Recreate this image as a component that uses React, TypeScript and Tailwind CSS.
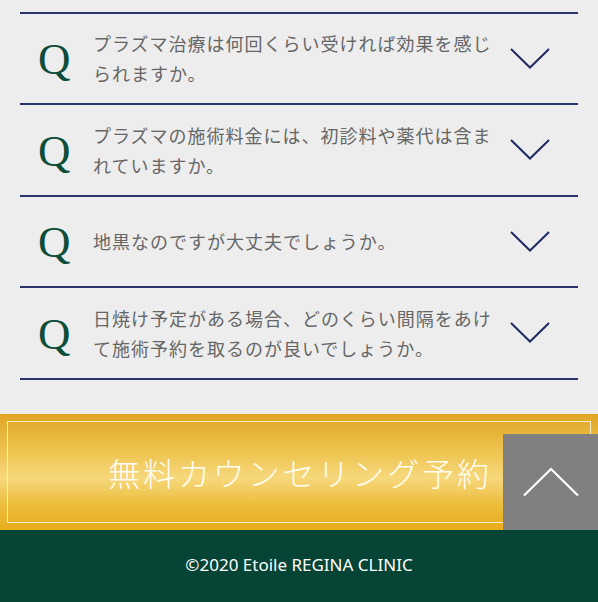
const faqs = [
  "プラズマ治療は何回くらい受ければ効果を感じられますか。",
  "プラズマの施術料金には、初診料や薬代は含まれていますか。",
  "地黒なのですが大丈夫でしょうか。",
  "日焼け予定がある場合、どのくらい間隔をあけて施術予約を取るのが良いでしょうか。",
];

export default function App() {
  return (
    <div className="min-h-[602px] bg-[#ededed] font-['Noto_Sans_CJK_JP',sans-serif]">
      <section className="px-[20px] pt-[11.5px]">
        <ul className="border-t-[2px] border-[#28336b]">
          {faqs.map((q) => (
            <FaqRow key={q} question={q} />
          ))}
        </ul>
      </section>

      <div className="relative mt-[34px]">
        <a
          href="#"
          className="block h-[116px] bg-[linear-gradient(to_bottom,#e1a523_0%,#efc654_35%,#f6d87c_55%,#edbd3c_78%,#e8ac1c_100%)] p-[7px]"
        >
          <div className="flex h-full items-center justify-center border border-[#fcefc6]">
            <span className="pl-[2px] text-[32px] font-light leading-none tracking-[0.09em] text-[#fffdf2]">
              無料カウンセリング予約
            </span>
          </div>
        </a>
        <button className="absolute bottom-0 right-0 flex h-[96px] w-[95px] items-center justify-center bg-[#808080]">
          <svg width="56" height="30" viewBox="0 0 56 30" fill="none">
            <path d="M1 28.5 L28 2 L55 28.5" stroke="#fff" strokeWidth="2.2" />
          </svg>
        </button>
      </div>

      <footer className="flex h-[73px] items-center justify-center bg-[#064435]">
        <p className="pb-[2px] font-['Noto_Sans',sans-serif] text-[17px] text-white">
          ©2020 Etoile REGINA CLINIC
        </p>
      </footer>
    </div>
  );
}

function FaqRow({ question }: { question: string }) {
  return (
    <li className="flex h-[91.5px] items-center border-b-[2px] border-[#28336b] pl-[18px] pr-[28px]">
      <span className="w-[55px] shrink-0 pt-[3px] font-['Liberation_Serif',serif] text-[45px] font-light leading-none text-[#0d4d3a]">
        Q
      </span>
      <p className="flex-1 pr-[8px] text-[18px] leading-[30px] tracking-[0.055em] text-[#666666]">
        {question}
      </p>
      <svg width="40" height="21" viewBox="0 0 40 21" fill="none" className="shrink-0">
        <path d="M1 1 L20 19.5 L39 1" stroke="#1f2a62" strokeWidth="2" />
      </svg>
    </li>
  );
}
